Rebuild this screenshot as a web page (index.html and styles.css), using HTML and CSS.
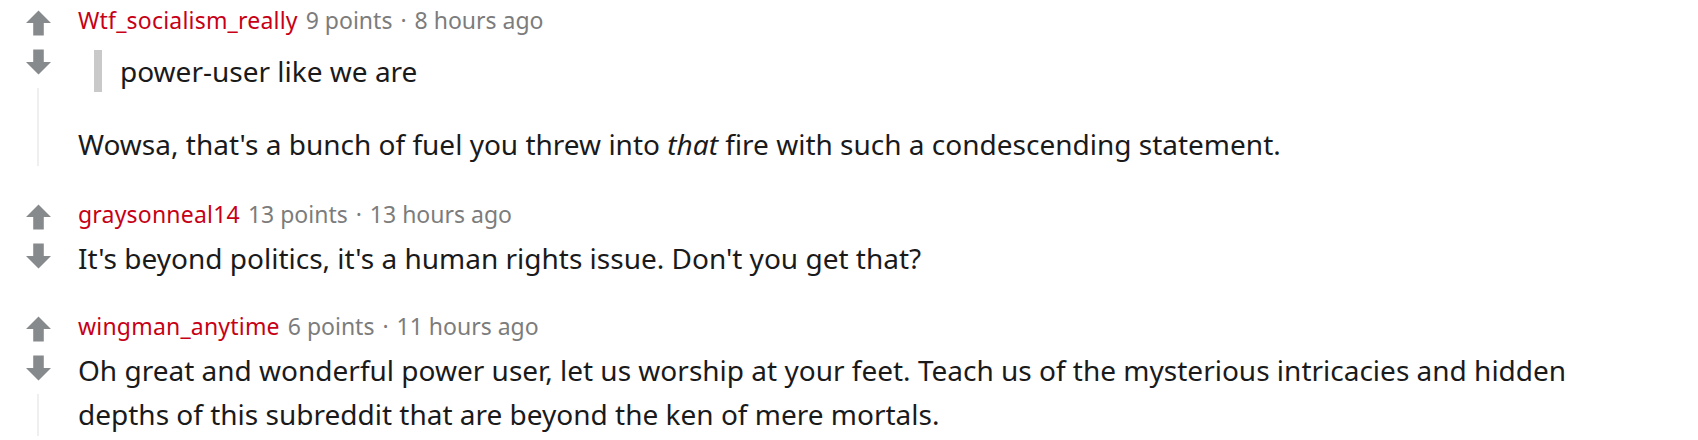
FILE: index.html
```html
<!DOCTYPE html>
<html lang="en">
<head>
<meta charset="utf-8">
<title>Comments</title>
<link rel="stylesheet" href="styles.css">
</head>
<body>
<div class="comments">

  <div class="comment c1">
    <div class="votes">
      <svg class="arrow" viewBox="0 0 26 26"><path d="M13 0 L26 13 H18.5 V26 H7.5 V13 H0 Z"/></svg>
      <svg class="arrow" viewBox="0 0 26 26"><path d="M13 26 L26 13 H18.5 V0 H7.5 V13 H0 Z"/></svg>
      <div class="threadline"></div>
    </div>
    <div class="content">
      <div class="meta"><span class="author">Wtf_socialism_really</span> <span class="info">9 points <span class="dot">·</span> 8 hours ago</span></div>
      <blockquote class="quote"><p>power-user like we are</p></blockquote>
      <p class="body gap">Wowsa, that's a bunch of fuel you threw into <em>that</em> fire with such a condescending statement.</p>
    </div>
  </div>

  <div class="comment c2">
    <div class="votes">
      <svg class="arrow" viewBox="0 0 26 26"><path d="M13 0 L26 13 H18.5 V26 H7.5 V13 H0 Z"/></svg>
      <svg class="arrow" viewBox="0 0 26 26"><path d="M13 26 L26 13 H18.5 V0 H7.5 V13 H0 Z"/></svg>
      <div class="threadline"></div>
    </div>
    <div class="content">
      <div class="meta"><span class="author">graysonneal14</span> <span class="info">13 points <span class="dot">·</span> 13 hours ago</span></div>
      <p class="body">It's beyond politics, it's a human rights issue. Don't you get that?</p>
    </div>
  </div>

  <div class="comment c3">
    <div class="votes">
      <svg class="arrow" viewBox="0 0 26 26"><path d="M13 0 L26 13 H18.5 V26 H7.5 V13 H0 Z"/></svg>
      <svg class="arrow" viewBox="0 0 26 26"><path d="M13 26 L26 13 H18.5 V0 H7.5 V13 H0 Z"/></svg>
      <div class="threadline"></div>
    </div>
    <div class="content">
      <div class="meta"><span class="author">wingman_anytime</span> <span class="info">6 points <span class="dot">·</span> 11 hours ago</span></div>
      <p class="body">Oh great and wonderful power user, let us worship at your feet. Teach us of the mysterious intricacies and hidden depths of this subreddit that are beyond the ken of mere mortals.</p>
    </div>
  </div>

</div>
</body>
</html>
```

FILE: styles.css
```css
html, body {
  margin: 0;
  padding: 0;
  background: #ffffff;
}

.comments {
  display: flex;
  flex-direction: column;
  width: 1698px;
}

.comment {
  display: flex;
  padding-bottom: 4px;
}

.c2 { margin-top: 24px; }
.c3 { margin-top: 20px; }

.votes {
  width: 76px;
  flex: none;
  display: flex;
  flex-direction: column;
  align-items: center;
  padding-top: 10px;
  gap: 13px;
}

.arrow {
  width: 25px;
  height: 26px;
  fill: #878a8c;
  display: block;
}

.threadline {
  flex: 1;
  width: 2px;
  background: #edeff1;
}

.content {
  flex: 1;
  padding-left: 2px;
  min-width: 0;
}

.meta {
  font-family: "Noto Sans", sans-serif;
  font-size: 23px;
  line-height: 40px;
  color: #7c7c7c;
}

.author {
  color: #c70016;
  letter-spacing: 0.2px;
}

.info {
  margin-left: 2px;
}

.dot {
  margin: 0 2px;
}

.body {
  margin: 2px 0 0;
  font-family: "Noto Sans", sans-serif;
  font-size: 28px;
  line-height: 44px;
  color: #1a1a1b;
  max-width: 1530px;
}

.body.gap {
  margin-top: 30px;
}

.quote {
  margin: 10px 0 0 16px;
  padding-left: 18px;
  border-left: 8px solid #c9c9c9;
}

.quote p {
  margin: 0;
  font-family: "Noto Sans", sans-serif;
  font-size: 28px;
  line-height: 42px;
  color: #1a1a1b;
}
```
